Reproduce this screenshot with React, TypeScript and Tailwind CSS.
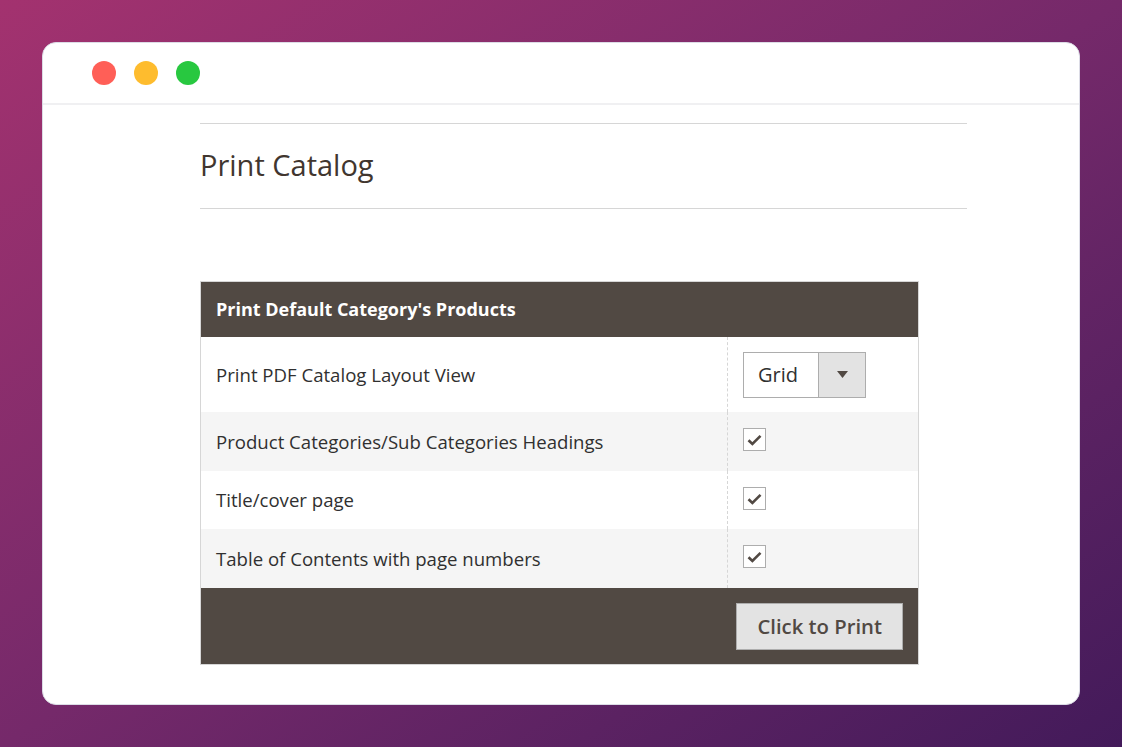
import React, { useState } from 'react';

const rows = [
  { label: 'Product Categories/Sub Categories Headings', h: 'h-[59px]' },
  { label: 'Title/cover page', h: 'h-[58px]' },
  { label: 'Table of Contents with page numbers', h: 'h-[59px]' },
];

function CheckBox({ checked, onToggle }: { checked: boolean; onToggle: () => void }) {
  return (
    <button
      onClick={onToggle}
      className="w-[23px] h-[23px] border border-[#adadad] bg-white flex items-center justify-center"
    >
      {checked && (
        <svg width="15" height="12" viewBox="0 0 15 12">
          <path d="M1.5 6.2 L5.4 10 L13.5 1.8" fill="none" stroke="#514943" strokeWidth="2.6" />
        </svg>
      )}
    </button>
  );
}

export default function App() {
  const [checks, setChecks] = useState([true, true, true]);

  const toggle = (i: number) => {
    const next = [...checks];
    next[i] = !next[i];
    setChecks(next);
  };

  return (
    <div
      className="w-[1122px] h-[747px] bg-gradient-to-br from-[#a3326f] via-[#75296a] to-[#431a5a] p-[42px] font-['Open_Sans',sans-serif] text-[#303030]"
    >
      <div className="w-[1038px] h-[663px] bg-white rounded-[14px] border border-[#dcdce6] overflow-hidden">
        {/* TITLE BAR */}
        <div className="h-[62px] border-b-2 border-[#f0f0f2] flex items-center gap-[18px] pl-[49px]">
          <span className="w-6 h-6 rounded-full bg-[#ff5f57]"></span>
          <span className="w-6 h-6 rounded-full bg-[#febc2e]"></span>
          <span className="w-6 h-6 rounded-full bg-[#28c840]"></span>
        </div>

        <div className="pl-[157px] pr-[112px] pt-[18px]">
          <div className="border-t border-[#d6d6d6]"></div>
          <h1 className="text-[29px] text-[#41362f] leading-none pt-[26px] pb-[29px]">Print Catalog</h1>
          <div className="border-t border-[#d6d6d6]"></div>

          {/* PRINT TABLE */}
          <div className="mt-[72px] w-[719px] border border-[#d6d6d6]">
            <div className="h-[55px] bg-[#514943] flex items-center px-[15px] text-white font-bold text-[18px]">
              Print Default Category&apos;s Products
            </div>

            <div className="flex h-[75px] bg-white">
              <div className="w-[527px] border-r border-dashed border-[#d6d6d6] flex items-center px-[15px] text-[18.6px]">
                Print PDF Catalog Layout View
              </div>
              <div className="flex-1 flex items-center pl-[15px]">
                <div className="flex h-[46px] border border-[#adadad]">
                  <span className="w-[74px] flex items-center pl-[14px] text-[20px] text-[#303030]">Grid</span>
                  <span className="w-[47px] bg-[#e3e3e3] border-l border-[#adadad] flex items-center justify-center">
                    <svg width="11" height="7" viewBox="0 0 11 7">
                      <path d="M0 0 H11 L5.5 7 Z" fill="#514943" />
                    </svg>
                  </span>
                </div>
              </div>
            </div>

            {rows.map((row, i) => (
              <div key={row.label} className={`flex ${row.h} ${i % 2 === 0 ? 'bg-[#f5f5f5]' : 'bg-white'}`}>
                <div className="w-[527px] border-r border-dashed border-[#d6d6d6] flex items-center px-[15px] text-[18.6px]">
                  {row.label}
                </div>
                <div className="flex-1 flex items-start pl-[15px] pt-[16px]">
                  <CheckBox checked={checks[i]} onToggle={() => toggle(i)} />
                </div>
              </div>
            ))}

            <div className="h-[76px] bg-[#514943] flex items-center justify-end pr-[15px]">
              <button className="h-[47px] px-[20px] bg-[#e3e3e3] border border-[#adadad] text-[20.3px] font-semibold text-[#514943]">
                Click to Print
              </button>
            </div>
          </div>
        </div>
      </div>
    </div>
  );
}
